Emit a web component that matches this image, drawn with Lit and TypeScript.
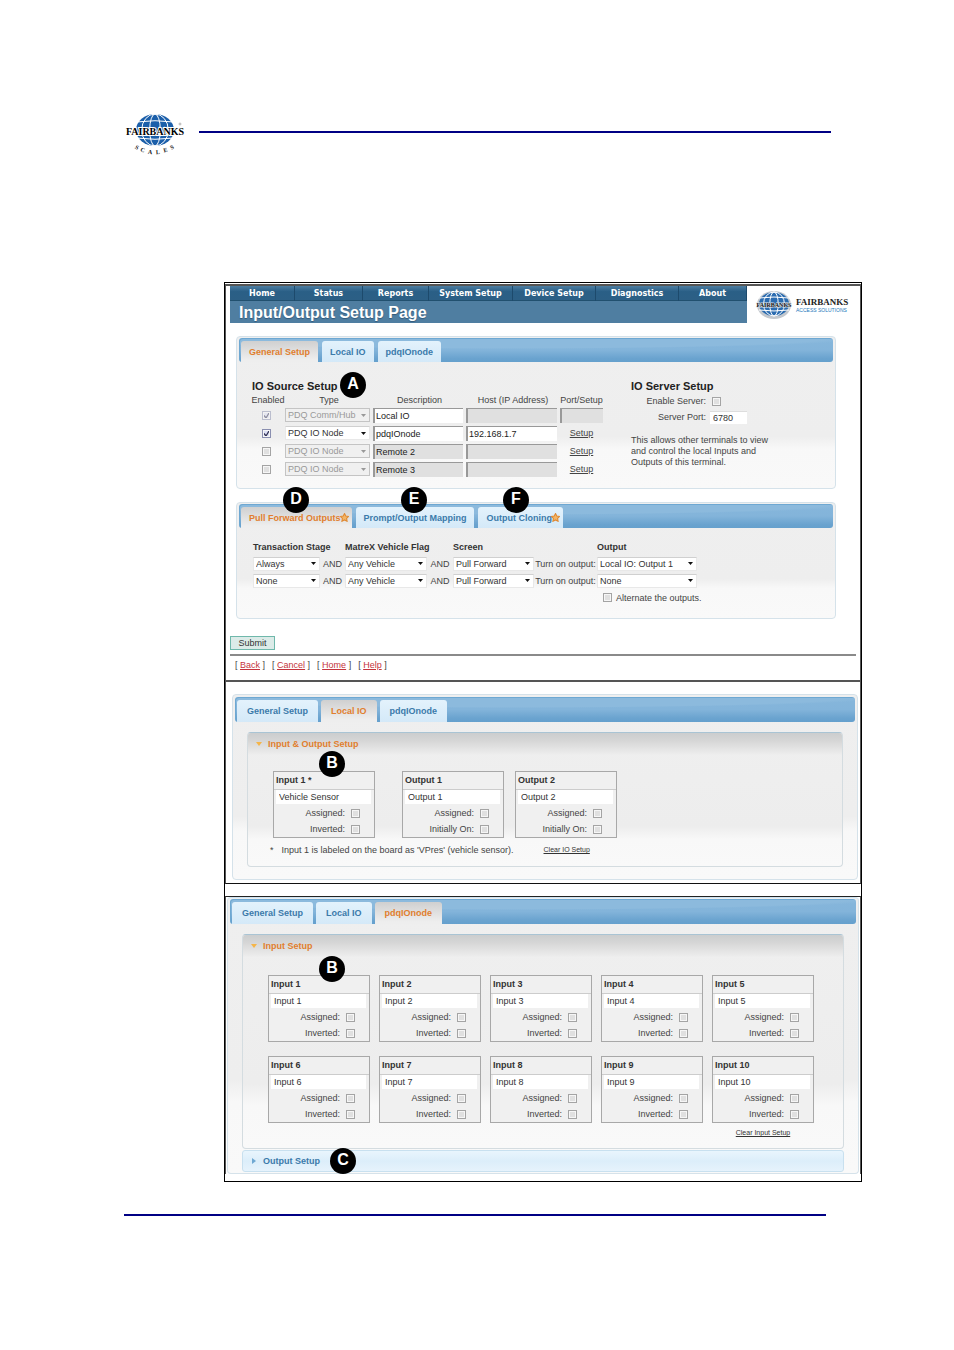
import { LitElement, html, css, svg, nothing } from "lit";
import { customElement } from "lit/decorators.js";
import { classMap } from "lit/directives/class-map.js";

interface Tab {
  label: string;
  star?: boolean;
}

interface Source {
  on: boolean;
  locked: boolean;
  type: string;
  desc: string;
  descOff: boolean;
  host: string;
  hostOff: boolean;
  link: boolean;
}

const MENU = ["Home", "Status", "Reports", "System Setup", "Device Setup", "Diagnostics", "About"];
const TABS: Tab[] = [{ label: "General Setup" }, { label: "Local IO" }, { label: "pdqIOnode" }];
const OUTPUT_TABS: Tab[] = [
  { label: "Pull Forward Outputs", star: true },
  { label: "Prompt/Output Mapping" },
  { label: "Output Cloning", star: true },
];
const SOURCES: Source[] = [
  { on: true, locked: true, type: "PDQ Comm/Hub", desc: "Local IO", descOff: false, host: "", hostOff: true, link: false },
  { on: true, locked: false, type: "PDQ IO Node", desc: "pdqIOnode", descOff: false, host: "192.168.1.7", hostOff: false, link: true },
  { on: false, locked: true, type: "PDQ IO Node", desc: "Remote 2", descOff: true, host: "", hostOff: true, link: true },
  { on: false, locked: true, type: "PDQ IO Node", desc: "Remote 3", descOff: true, host: "", hostOff: true, link: true },
];
const RULES = [
  ["Always", "Any Vehicle", "Pull Forward", "Local IO: Output 1"],
  ["None", "Any Vehicle", "Pull Forward", "None"],
];
const LINKS = ["Back", "Cancel", "Home", "Help"];

const globe = (cx: number, cy: number, rx: number, ry: number, color: string) => svg`
  <ellipse cx=${cx} cy=${cy} rx=${rx} ry=${ry} fill=${color}></ellipse>
  <g fill="none" stroke="#fff" stroke-width="1">
    <ellipse cx=${cx} cy=${cy} rx=${rx * 0.7} ry=${ry}></ellipse>
    <ellipse cx=${cx} cy=${cy} rx=${rx * 0.28} ry=${ry}></ellipse>
    <path d="M${cx - rx} ${cy - ry * 0.5}Q${cx} ${cy - ry * 0.66} ${cx + rx} ${cy - ry * 0.5}"></path>
    <path d="M${cx - rx} ${cy + ry * 0.5}Q${cx} ${cy + ry * 0.66} ${cx + rx} ${cy + ry * 0.5}"></path>
  </g>`;

const star = html`<svg class="star" viewBox="0 0 12 12" aria-hidden="true">
  <path d="M6 .8 7.7 4 11.4 4.6 8.8 7.2 9.4 11 6 9.3 2.6 11 3.2 7.2 .6 4.6 4.3 4Z" fill="#f3b566" stroke="#e08b35" stroke-width="1.5"></path>
</svg>`;

@customElement("app-root")
export class AppRoot extends LitElement {
  static styles = css`
    :host {
      display: block;
      background: #fff;
      color: #444;
      font: 9px/12px "Liberation Sans", Arial, sans-serif;
    }
    * { box-sizing: border-box; }
    a { color: inherit; text-decoration: underline; }
    input, select, button { font: inherit; color: #333; margin: 0; border-radius: 0; }

    .masthead { display: flex; gap: 14px; padding: 113px 123px 0 125px; }
    .brand { width: 60px; height: 42px; flex: none; overflow: visible; }
    .rule { border: 0; height: 2px; background: #000084; margin: 18px 0 0; flex: 1; }
    .endrule { border: 0; height: 2px; background: #000084; margin: 32px 128px 40px 124px; }

    .figure { margin: 127px 92px 0 224px; border: 1px solid #000; padding: 1px 0 7px; }
    .panel { position: relative; border: solid #555; border-width: 0 1px; }
    .panel.first { border-top: 2px solid #555; border-bottom: 2px solid #555; padding: 0 4px 9px; }
    .panel.second { border-bottom: 1px solid #111; padding: 12px 2px 3px 6px; }
    .panel.third { border-top: 1px solid #222; margin-top: 12px; padding: 0 1px; }

    .top { display: flex; margin-right: -4px; }
    .bar { flex: 1; background: #4f7ea1; }
    .menu {
      display: grid;
      grid-template-columns: 65fr 68fr 66fr 84fr 83fr 83fr 68fr;
      background: linear-gradient(#4c7da1, #2a5f86 40%, #2c5f85);
      border-bottom: 1px solid #21506f;
      height: 15px;
      font: bold 8px/15px "DejaVu Sans", Verdana, sans-serif;
      text-align: center;
    }
    .menu a { color: #fff; text-decoration: none; border-right: 1px solid #1d4a6c; white-space: nowrap; }
    .title { margin: 0; padding-left: 9px; font-size: 16px; line-height: 24px; height: 22px; color: #fff; overflow: hidden; text-shadow: 0 1px 1px #33597a; }
    .sitelogo { width: 113px; height: 37px; flex: none; }

    .widget { position: relative; border: 1px solid #d5e2ea; border-radius: 4px; padding: 1px 2px 0; background: linear-gradient(#efefef, #eee 66%, #f8f8f8 74%, #f9f9f9); }
    .first .widget { margin: 13px 20px 0 6px; }
    .wide { padding: 2px 2px 12px; }
    .third .wide { padding-top: 1px; padding-bottom: 1px; border-top-color: #cfe4f2; }
    .strip {
      display: flex;
      gap: 4px;
      height: 24px;
      padding: 3px 2px 0;
      border-radius: 3px;
      background:
        radial-gradient(ellipse 60% 11px at 45% 0, #8cbadd 90%, transparent),
        linear-gradient(#86b6db, #83b4da 50%, #6aa3cf 85%, #65a0cd);
      box-shadow: inset 1px 1px 0 #6ea8d2;
    }
    .wide .strip { height: 25px; }
    .tab {
      display: flex;
      align-items: center;
      border: 0;
      border-radius: 3px 3px 0 0;
      padding: 0 8px;
      background: linear-gradient(#e3f2fc, #d4e9f8);
      color: #3b7aaa;
      font-weight: bold;
      white-space: nowrap;
    }
    .wide .tab { padding: 0 10px; }
    .wide .strip { gap: 3px; }
    .tab.starred { padding-right: 3px; }
    .tab.active { color: #e17e2e; background: linear-gradient(#d0d0d0, #eee 90%); }
    .star { width: 9px; height: 9px; margin-left: -1px; }

    .badge {
      position: absolute;
      width: 26px;
      height: 26px;
      border-radius: 50%;
      background: #000;
      color: #fff;
      font-weight: bold;
      font-size: 16px;
      line-height: 24px;
      text-align: center;
    }
    .at-a { left: 103px; top: 35px; }
    .at-d { left: 46px; top: -16px; }
    .at-e { left: 164px; top: -16px; }
    .at-f { left: 266px; top: -16px; }
    .at-b2 { left: 86px; top: 56px; }
    .at-b3 { left: 91px; top: 58px; }
    .at-c { left: 87px; top: -3px; }

    .general { display: grid; grid-template-columns: 380px 1fr; padding: 18px 0 10px 12px; }
    .subhead { margin: 0 0 2px; padding-left: 1px; font-size: 11px; line-height: 13px; color: #222; }
    .server .subhead { margin: 0; padding: 0; }
    .sources { border-collapse: collapse; table-layout: fixed; width: 352px; }
    .sources th { font-weight: normal; padding: 0; height: 11px; line-height: 11px; white-space: nowrap; }
    .sources td { padding: 0 3px 0 0; height: 18px; text-align: center; }
    .c1 { width: 34px; } .c2 { width: 88px; } .c3 { width: 93px; } .c4 { width: 94px; } .c5 { width: 43px; }
    .sources td:last-child { padding: 0; }

    .field { display: block; width: 100%; height: 15px; border: 0; padding: 0 1px; outline: 0; background: #fff; border-top: 1px solid #999; border-left: 2px solid #999; color: #222; }
    .field.off { background: #e0e0e0; }
    .drop {
      display: block;
      appearance: none;
      width: 100%;
      height: 14px;
      padding: 0 12px 0 2px;
      border: 1px solid #e8e8e8;
      border-top-color: #d0d0d0;
      background: #fff url("data:image/svg+xml,%3Csvg xmlns='http://www.w3.org/2000/svg' viewBox='0 0 5 3'%3E%3Cpath d='M0 0h5L2.500 3z' fill='%23111'/%3E%3C/svg%3E") no-repeat right 3px center / 5px 3px;
    }
    .drop:disabled { opacity: 1; color: #999; border-color: #c4c4c4; background-color: #f0f0f0; background-image: url("data:image/svg+xml,%3Csvg xmlns='http://www.w3.org/2000/svg' viewBox='0 0 5 3'%3E%3Cpath d='M0 0h5L2.500 3z' fill='%23999'/%3E%3C/svg%3E"); }
    .check { appearance: none; display: inline-block; vertical-align: middle; flex: none; width: 9px; height: 9px; border: 1px solid #a4a4a4; background: #e0e0e0; box-shadow: inset 0 0 0 1px #f6f6f6; }
    .check:checked { border-color: #8a8fb0; background: #dde0f4 url("data:image/svg+xml,%3Csvg xmlns='http://www.w3.org/2000/svg' viewBox='0 0 7 7'%3E%3Cpath d='M1 3.500 3 6 6 1' fill='none' stroke='%23335' stroke-width='1.300'/%3E%3C/svg%3E") center / 7px 7px; }
    .check:disabled { opacity: .5; }
    .line { display: flex; align-items: center; }
    .server .line { height: 16px; }
    .server .name { width: 75px; text-align: right; white-space: nowrap; }
    .server .check { margin-left: 6px; }
    .port { width: 37px; height: 13px; margin-left: 4px; border: 0; border-top: 1px solid #ddd; padding: 0 3px; background: #fff; }
    .note { margin: 10px 0 0; line-height: 11px; }

    .rules { display: grid; grid-template-columns: 67px 25px 82px 26px 81px 63px 100px; align-items: center; padding: 10px 0 12px 14px; grid-auto-rows: 17px; white-space: nowrap; text-align: center; }
    .rules .head { text-align: left; color: #333; font-weight: bold; }
    .h2 { grid-column: 3; } .h3 { grid-column: 5; } .h4 { grid-column: 7; }
    .alt { grid-column: 7; display: flex; align-items: center; gap: 4px; padding-left: 6px; }

    .submit { display: block; margin: 17px 0 0; width: 45px; height: 14px; padding: 0; border: 1px solid #6fb8ab; background: #dcebe8; line-height: 12px; }
    .sep { border: 0; height: 2px; margin: 4px 0 3px; background: #8a8a8a; }
    .links { display: flex; gap: 7px; padding-left: 5px; }
    .links a { color: #c4343c; }

    .acc { position: relative; border: 1px solid #d4dce0; border-top-color: #a9c4d4; border-radius: 4px; background: linear-gradient(#efefef, #ededed 70%, #f8f8f8 80%, #f9f9f9); margin: 10px 12px 0; padding-bottom: 10px; }
    .acchead { display: flex; align-items: center; gap: 6px; width: 100%; height: 22px; padding: 0 0 0 8px; border: 0; background: linear-gradient(#cbcdce, #d6d6d6 35%, #eee); color: #e17e2e; font-weight: bold; border-radius: 3px 3px 0 0; }
    .mark { width: 6px; height: 6px; }
    .closed { position: relative; margin: 1px 12px 0; border: 1px solid #c8e0ef; border-radius: 3px; background: linear-gradient(#e9f5fd, #dceefa 50%, #e6f3fc); }
    .closed .acchead { background: none; color: #3b7aaa; height: 20px; }
    .boxes { display: flex; padding: 16px 25px 0; gap: 11px; }
    .gapafter { margin-right: 16px; }
    .grid { display: grid; grid-template-columns: repeat(5, 102px); gap: 14px 9px; padding: 18px 25px 0; }
    .box { width: 102px; border: 1px solid #a8a8a8; background: #f0f0f0; }
    .boxname { margin: 0; padding-left: 2px; font-size: 9px; line-height: 17px; border-bottom: 1px solid #ccc; color: #333; }
    .boxfield { display: block; width: 95px; height: 14px; margin: 0 2px 1px; border: 0; padding: 0 3px; background: #fff; }
    .opt { display: flex; align-items: center; justify-content: flex-end; gap: 6px; height: 16px; padding-right: 14px; }
    .foot { display: flex; align-items: center; padding: 6px 0 0 22px; height: 18px; white-space: nowrap; }
    .foot .text { margin-left: 8px; flex: 0 0 262px; }
    .clear { font-size: 7px; color: #333; }
    .clearrow { display: grid; grid-template-columns: repeat(5, 102px); column-gap: 9px; padding: 4px 25px 0; line-height: 11px; }
    .clearrow .clear { grid-column: 5; text-align: center; }
  `;

  private badge(letter: string, cls: string) {
    return html`<span class="badge ${cls}">${letter}</span>`;
  }

  private strip(tabs: Tab[], active: number) {
    return html`<div class="strip" role="tablist">
      ${tabs.map(
        (t, i) => html`<button class=${classMap({ tab: true, active: i === active, starred: !!t.star })} role="tab" aria-selected=${i === active}>
          ${t.label}${t.star ? star : nothing}
        </button>`
      )}
    </div>`;
  }

  private drop(value: string, label: string, disabled = false) {
    return html`<select class="drop" aria-label=${label} ?disabled=${disabled}><option>${value}</option></select>`;
  }

  private box(name: string, value: string, second: string, cls = "") {
    return html`<section class="box ${cls}">
      <h3 class="boxname">${name}</h3>
      <input class="boxfield" aria-label=${name} .value=${value} />
      <label class="opt">Assigned: <input class="check" type="checkbox" /></label>
      <label class="opt">${second}: <input class="check" type="checkbox" /></label>
    </section>`;
  }

  private sourceRow(s: Source) {
    return html`<tr>
      <td><input class="check" type="checkbox" aria-label="Enabled" .checked=${s.on} ?disabled=${s.on && s.locked} /></td>
      <td>${this.drop(s.type, "Type", s.locked)}</td>
      <td><input class=${classMap({ field: true, off: s.descOff })} aria-label="Description" .value=${s.desc} /></td>
      <td><input class=${classMap({ field: true, off: s.hostOff })} aria-label="Host" .value=${s.host} /></td>
      <td>${s.link ? html`<a href="#setup">Setup</a>` : html`<input class="field off" aria-label="Port" />`}</td>
    </tr>`;
  }

  render() {
    return html`
      <header class="masthead">
        <svg class="brand" viewBox="0 0 60 42" role="img" aria-label="Fairbanks Scales">
          ${globe(30, 17, 19, 16, "#1b5faa")}
          <text x="30" y="22" text-anchor="middle" font-family="Liberation Serif, serif" font-weight="bold" font-size="10" fill="#000" stroke="#fff" stroke-width="2" paint-order="stroke">FAIRBANKS</text>
          <g font-family="Liberation Serif, serif" font-weight="bold" font-size="6" fill="#111" text-anchor="middle">
            <text x="11" y="36" transform="rotate(30 11 36)">S</text>
            <text x="17" y="39" transform="rotate(18 17 39)">C</text>
            <text x="25" y="41" transform="rotate(6 25 41)">A</text>
            <text x="33" y="41" transform="rotate(-4 33 41)">L</text>
            <text x="41" y="39" transform="rotate(-16 41 39)">E</text>
            <text x="48" y="36" transform="rotate(-30 48 36)">S</text>
          </g>
          <circle cx="55" cy="11" r="1" fill="none" stroke="#777" stroke-width=".5"></circle>
        </svg>
        <hr class="rule" />
      </header>

      <main class="figure">
        <section class="panel first">
          <div class="top">
            <div class="bar">
              <nav class="menu">${MENU.map((m) => html`<a href="#menu">${m}</a>`)}</nav>
              <h1 class="title">Input/Output Setup Page</h1>
            </div>
            <svg class="sitelogo" viewBox="0 0 113 37" role="img" aria-label="Fairbanks Access Solutions">
              <ellipse cx="27" cy="19" rx="17" ry="14" fill="#c3c8ce"></ellipse>
              ${globe(27, 18, 15, 12, "#2b6cb0")}
              <text x="27" y="21" text-anchor="middle" font-family="Liberation Serif, serif" font-weight="bold" font-size="6" fill="#111" stroke="#dde3ea" stroke-width="1" paint-order="stroke">FAIRBANKS</text>
              <text x="49" y="19" font-family="Liberation Serif, serif" font-weight="bold" font-size="9" fill="#222">FAIRBANKS</text>
              <text x="49" y="26" font-family="Liberation Sans, sans-serif" font-size="5" fill="#2277bb">ACCESS SOLUTIONS</text>
            </svg>
          </div>

          <div class="widget">
            ${this.strip(TABS, 0)}
            <div class="general">
              <div>
                <h2 class="subhead">IO Source Setup</h2>
                <table class="sources">
                  <thead>
                    <tr><th class="c1">Enabled</th><th class="c2">Type</th><th class="c3">Description</th><th class="c4">Host (IP Address)</th><th class="c5">Port/Setup</th></tr>
                  </thead>
                  <tbody>${SOURCES.map((s) => this.sourceRow(s))}</tbody>
                </table>
              </div>
              <div class="server">
                <h2 class="subhead">IO Server Setup</h2>
                <label class="line"><span class="name">Enable Server:</span><input class="check" type="checkbox" /></label>
                <label class="line"><span class="name">Server Port:</span><input class="port" .value=${"6780"} /></label>
                <p class="note">This allows other terminals to view<br />and control the local Inputs and<br />Outputs of this terminal.</p>
              </div>
            </div>
            ${this.badge("A", "at-a")}
          </div>

          <div class="widget">
            ${this.strip(OUTPUT_TABS, 0)}
            <div class="rules">
              <span class="head">Transaction Stage</span>
              <span class="head h2">MatreX Vehicle Flag</span>
              <span class="head h3">Screen</span>
              <span class="head h4">Output</span>
              ${RULES.map(
                (r) => html`${this.drop(r[0], "Transaction Stage")}<span>AND</span>${this.drop(r[1], "MatreX Vehicle Flag")}<span>AND</span>${this.drop(r[2], "Screen")}<span>Turn on output:</span>${this.drop(r[3], "Output")}`
              )}
              <label class="alt"><input class="check" type="checkbox" />Alternate the outputs.</label>
            </div>
            ${this.badge("D", "at-d")}${this.badge("E", "at-e")}${this.badge("F", "at-f")}
          </div>

          <button class="submit">Submit</button>
          <hr class="sep" />
          <nav class="links">${LINKS.map((l) => html`<span>[ <a href="#nav">${l}</a> ]</span>`)}</nav>
        </section>

        <section class="panel second">
          <div class="widget wide">
            ${this.strip(TABS, 1)}
            <div class="acc">
              <button class="acchead">
                <svg class="mark" viewBox="0 0 6 6" aria-hidden="true"><path d="M0 1h6L3 5z" fill="#f5b548"></path></svg>Input &amp; Output Setup
              </button>
              <div class="boxes">
                ${this.box("Input 1 *", "Vehicle Sensor", "Inverted", "gapafter")}
                ${this.box("Output 1", "Output 1", "Initially On")}
                ${this.box("Output 2", "Output 2", "Initially On")}
              </div>
              <div class="foot"><span>*</span><span class="text">Input 1 is labeled on the board as 'VPres' (vehicle sensor).</span><a class="clear" href="#clear">Clear IO Setup</a></div>
            </div>
            ${this.badge("B", "at-b2")}
          </div>
        </section>

        <section class="panel third">
          <div class="widget wide">
            ${this.strip(TABS, 2)}
            <div class="acc">
              <button class="acchead">
                <svg class="mark" viewBox="0 0 6 6" aria-hidden="true"><path d="M0 1h6L3 5z" fill="#f5b548"></path></svg>Input Setup
              </button>
              <div class="grid">
                ${Array.from({ length: 10 }, (_, i) => this.box(`Input ${i + 1}`, `Input ${i + 1}`, "Inverted"))}
              </div>
              <div class="clearrow"><a class="clear" href="#clear">Clear Input Setup</a></div>
            </div>
            <div class="closed">
              <button class="acchead">
                <svg class="mark" viewBox="0 0 6 6" aria-hidden="true"><path d="M1 0v6L5 3z" fill="#6fa8d2"></path></svg>Output Setup
              </button>
              ${this.badge("C", "at-c")}
            </div>
            ${this.badge("B", "at-b3")}
          </div>
        </section>
      </main>
      <hr class="endrule" />
    `;
  }
}
